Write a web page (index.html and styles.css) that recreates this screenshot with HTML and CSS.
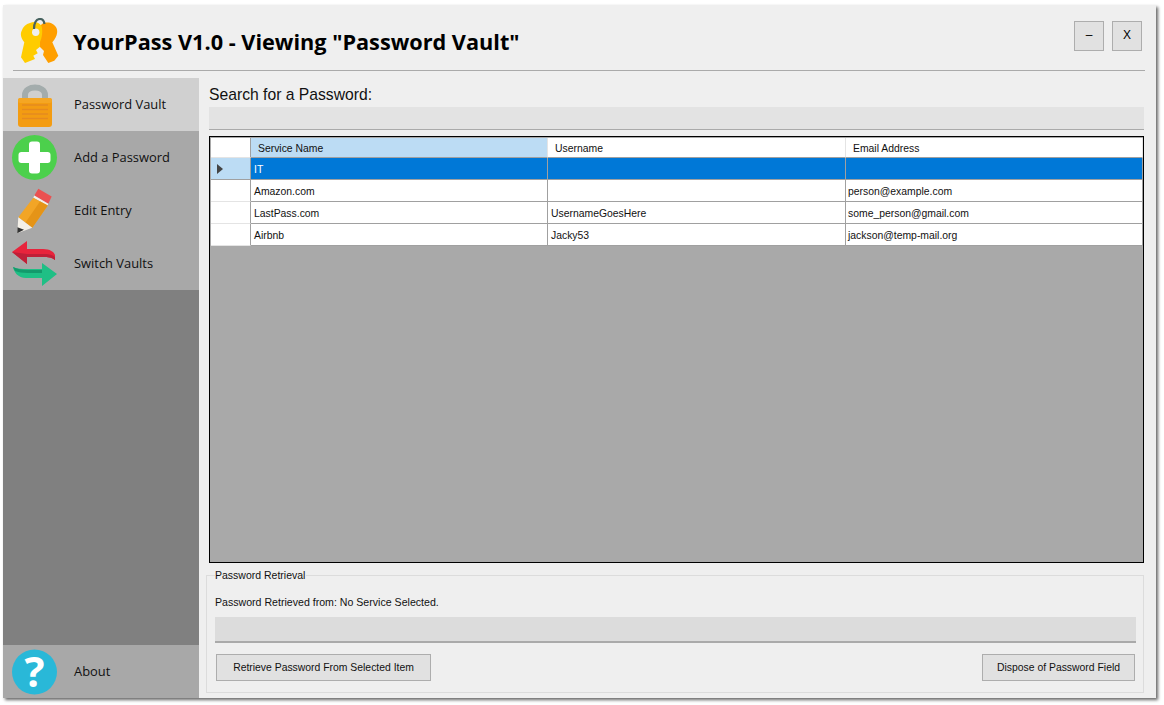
FILE: index.html
```html
<!DOCTYPE html>
<html lang="en">
<head>
<meta charset="utf-8">
<title>YourPass</title>
<link rel="stylesheet" href="styles.css">
</head>
<body>
<div class="window">
  <header class="titlebar">
    <svg class="logo" width="40" height="46" viewBox="0 0 40 46">
      <path d="M22 6 C27 3 34 5 36.500 10 C38.500 15 36 20 32.300 24.300 L38.300 37.700 L34.300 42.700 L28.300 45 L25 40 L23 37 L24 33 L20 29 L20 8 Z" fill="#ff9f00"/>
      <path d="M10 5 C14 3 19 4 21.500 8 C23 13 22 20 20 24 L20 28.700 L16 32 L17.700 35.300 L13.300 37.700 L15 41 L5 45 L1 39.300 L4.300 24.300 C1 20 0 16 1.700 12.700 C3 9 6 6 10 5 Z" fill="#ffcc00"/>
      <circle cx="15.700" cy="14.300" r="3.700" fill="#efefef"/>
      <path d="M14 11 C14 5 16 1 20 1 C23 1 24 3 24.500 6" fill="none" stroke="#46625f" stroke-width="2.200"/>
    </svg>
    <h1 class="title">YourPass V1.0 - Viewing "Password Vault"</h1>
    <div class="win-buttons">
      <button class="win-btn">–</button>
      <button class="win-btn">X</button>
    </div>
  </header>
  <div class="body">
    <nav class="sidebar">
      <div class="nav-item active">
        <svg class="nav-icon" width="50" height="50" viewBox="0 0 50 50">
          <path d="M15 19 V15 C15 5 35 5 35 15 V19" fill="none" stroke="#a3acac" stroke-width="6"/>
          <rect x="8" y="18" width="34" height="29" rx="3" fill="#f39c12"/>
          <rect x="8" y="18" width="34" height="5" rx="2" fill="#f5a623"/>
          <path d="M12 25 H38 M12 29.500 H38 M12 34 H38 M12 38.500 H38" stroke="#e58a20" stroke-width="1.500"/>
        </svg>
        <span>Password Vault</span>
      </div>
      <div class="nav-item">
        <svg class="nav-icon" width="50" height="50" viewBox="0 0 50 50">
          <circle cx="24.500" cy="24.500" r="22.500" fill="#4cd04c"/>
          <rect x="8.500" y="19" width="32" height="11" rx="3" fill="#fff"/>
          <rect x="19" y="8.500" width="11" height="32" rx="3" fill="#fff"/>
        </svg>
        <span>Add a Password</span>
      </div>
      <div class="nav-item">
        <svg class="nav-icon" width="50" height="50" viewBox="0 0 50 50">
          <path d="M28.300 2.800 L41.700 10.500 L38.300 17.800 L24.300 9.500 Z" fill="#ea5151"/>
          <path d="M24.300 9.500 L38.300 17.800 L37.700 19.500 L23.300 11.800 Z" fill="#f4f0e8"/>
          <path d="M23.300 11.800 L37.700 19.500 L22.300 41.800 L8.300 31.200 Z" fill="#f2a526"/>
          <path d="M30 15.500 L15.500 36.500 L22.300 41.800 L37.700 19.500 Z" fill="#e59417"/>
          <path d="M8.300 31.200 L22.300 41.800 L7.300 47.200 Z" fill="#f4f0e8"/>
          <path d="M7.500 41.200 L14 43.800 L7.300 47.200 Z" fill="#333"/>
        </svg>
        <span>Edit Entry</span>
      </div>
      <div class="nav-item">
        <svg class="nav-icon" width="50" height="50" viewBox="0 0 50 50">
          <path d="M2 13 L17 2 V10 H33 C40 10 44 13 45 16 L45 21 C41 18 38 18 33 18 H17 V25 Z" fill="#e8243c"/>
          <path d="M17 15 H33 C39 15 43 16 45 18 V21 C41 18 38 18 33 18 H17 V25 L2 13 Z" fill="#bf2038"/>
          <path d="M47 35 L32 24 V30 H18 C12 30 7 30 3 28 C4 33 8 39 16 39 H32 V47 Z" fill="#1fbf85"/>
          <path d="M3 28 C7 30 12 31 18 31 H32 V34 H18 C12 34 8 33 5 32 Z" fill="#149a6c"/>
        </svg>
        <span>Switch Vaults</span>
      </div>
      <div class="nav-spacer"></div>
      <div class="nav-item">
        <svg class="nav-icon" width="50" height="50" viewBox="0 0 50 50">
          <circle cx="24.500" cy="25" r="22.500" fill="#29b8d8"/>
          <text x="24.500" y="40" text-anchor="middle" class="q-mark">?</text>
        </svg>
        <span>About</span>
      </div>
    </nav>
    <main class="content">
      <label class="search-label">Search for a Password:</label>
      <div class="search-box"></div>
      <div class="grid-view">
        <div class="row header">
          <div class="cell rowhead"></div>
          <div class="cell hl">Service Name</div>
          <div class="cell">Username</div>
          <div class="cell">Email Address</div>
        </div>
        <div class="row selected">
          <div class="cell rowhead"><i class="arrow"></i></div>
          <div class="cell">IT</div>
          <div class="cell"></div>
          <div class="cell"></div>
        </div>
        <div class="row">
          <div class="cell rowhead"></div>
          <div class="cell">Amazon.com</div>
          <div class="cell"></div>
          <div class="cell">person@example.com</div>
        </div>
        <div class="row">
          <div class="cell rowhead"></div>
          <div class="cell">LastPass.com</div>
          <div class="cell">UsernameGoesHere</div>
          <div class="cell">some_person@gmail.com</div>
        </div>
        <div class="row">
          <div class="cell rowhead"></div>
          <div class="cell">Airbnb</div>
          <div class="cell">Jacky53</div>
          <div class="cell">jackson@temp-mail.org</div>
        </div>
      </div>
      <fieldset class="group">
        <legend>Password Retrieval</legend>
        <p class="status">Password Retrieved from: No Service Selected.</p>
        <div class="pw-box"></div>
        <div class="actions">
          <button class="btn retrieve">Retrieve Password From Selected Item</button>
          <button class="btn dispose">Dispose of Password Field</button>
        </div>
      </fieldset>
    </main>
  </div>
</div>
</body>
</html>
```
FILE: styles.css
```css
* { box-sizing: border-box; }
html, body { margin: 0; padding: 0; background: #fff; overflow: hidden; }
body { width: 1164px; height: 705px; font-family: "Liberation Sans", Arial, sans-serif; color: #111; }

.window {
  margin: 5px 0 0 3px;
  width: 1153px;
  height: 693px;
  background: #efefef;
  box-shadow: 2px 2px 3px rgba(0,0,0,.6);
  display: flex;
  flex-direction: column;
}

.titlebar {
  height: 66px;
  margin: 0 11px 0 10px;
  padding: 0 3px 0 7px;
  border-bottom: 1px solid #aaa;
  display: flex;
  align-items: flex-start;
  flex: none;
}
.logo { margin-top: 13px; flex: none; }
.title {
  margin: 20px 0 0 13px;
  font: 700 21.700px/34px "Open Sans", sans-serif;
  color: #000;
  white-space: nowrap;
}
.win-buttons { margin-left: auto; margin-top: 16px; display: flex; gap: 8px; }
.win-btn {
  width: 30px;
  height: 30px;
  padding: 0 0 2px;
  background: #e1e1e1;
  border: 1px solid #adadad;
  font: 12px "Liberation Sans", sans-serif;
  color: #000;
}

.body { flex: 1; display: flex; margin-top: 7px; min-height: 0; }

.sidebar {
  width: 196px;
  flex: none;
  background: #808080;
  display: flex;
  flex-direction: column;
}
.nav-spacer { flex: 1; }
.nav-item {
  height: 53px;
  background: #a8a8a8;
  display: flex;
  align-items: center;
  font: 12.900px/16px "Open Sans", sans-serif;
  color: #111;
  flex: none;
}
.nav-item span { position: relative; top: -1px; }
.nav-item.active { background: #d0d0d0; }
.nav-icon { margin-left: 7px; margin-right: 14px; flex: none; overflow: visible; }
.q-mark { font: 700 42px "Open Sans", sans-serif; fill: #fff; }

.content { flex: 1; padding: 0 12px 0 10px; min-width: 0; }
.search-label { display: block; height: 29px; padding-top: 8px; font-size: 15.700px; line-height: 18px; color: #111; }
.search-box { width: 935px; height: 23px; background: #e3e3e3; border-bottom: 1px solid #aaa; }

.grid-view {
  width: 935px;
  height: 427px;
  margin-top: 6px;
  padding: 1px 0 0 1px;
  background: #a9a9a9;
  border: 1px solid #000;
}
.row {
  display: grid;
  grid-template-columns: 40px 297px 298px 297px;
  height: 22px;
  background: #fff;
  font-size: 10.400px;
  line-height: 23px;
  color: #111;
}
.row.header { height: 20px; line-height: 21px; }
.cell {
  padding-left: 3px;
  border-right: 1px solid #a0a0a0;
  border-bottom: 1px solid #a0a0a0;
  white-space: nowrap;
  overflow: hidden;
}
.row:not(.header) .cell:last-child { padding-left: 2px; }
.header .cell { padding-left: 7px; border-right-color: #e4e4e4; }
.header .cell.rowhead { border-right-color: #a0a0a0; }
.header .cell.hl { background: #bcdcf4; }
.rowhead { border-bottom-color: #e4e4e4; }
.selected .cell { background: #0078d7; color: #fff; border-bottom-color: #a0a0a0; }
.selected .cell.rowhead { background: #bcdcf4; border-bottom-color: #a0a0a0; }
.selected .cell:first-child { position: relative; }
.arrow {
  position: absolute;
  left: 6px;
  top: 6px;
  border-left: 6px solid #444;
  border-top: 5px solid transparent;
  border-bottom: 5px solid transparent;
}

.group {
  margin: 5px 0 0 -3px;
  width: 938px;
  height: 125px;
  padding: 0 7px 0 8px;
  border: 1px solid #dcdcdc;
  position: relative;
  min-width: 0;
}
.group legend { padding: 0 1px 0 0; margin-left: 0; font-size: 10.500px; line-height: 14px; }
.status { margin: 13px 0 0; font-size: 10.600px; line-height: 14px; height: 14px; }
.pw-box { margin-top: 8px; height: 26px; background: #dcdcdc; border-bottom: 2px solid #aaa; width: 921px; }
.actions { margin-top: 11px; padding: 0 1px; display: flex; justify-content: space-between; }
.btn {
  height: 27px;
  padding: 0;
  background: #e1e1e1;
  border: 1px solid #adadad;
  font: 10.400px "Liberation Sans", sans-serif;
  color: #111;
}
.retrieve { width: 215px; }
.dispose { width: 153px; }
```
